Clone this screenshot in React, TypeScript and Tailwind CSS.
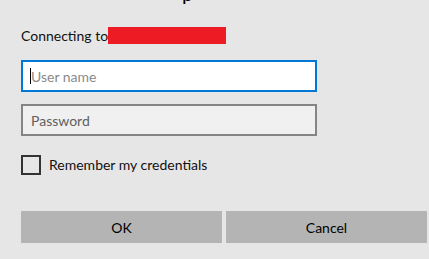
import React from 'react';

const font = { fontFamily: 'Lato, "Noto Sans", sans-serif' };

export default function App() {
  return (
    <div className="w-[429px] h-[259px] overflow-hidden bg-[#e6e6e6] text-[#000]" style={font}>
      {/* clipped dialog title: only the tail of a letter shows */}
      <div className="h-[4px] overflow-hidden">
        <div className="ml-[182px] -mt-[19px] text-[20px] leading-[24px] text-[#000]">p</div>
      </div>

      <div className="pl-[21px] pr-[112px]">
        <div className="flex items-center mt-[23px] h-[17px]">
          <span className="text-[14px] leading-[17px] text-[#111]">Connecting to</span>
          <span className="w-[118px] h-[17px] bg-[#ed1c24]" />
        </div>

        <div className="mt-[16px] h-[32px] w-[296px] border-2 border-[#0078d7] bg-white flex items-center pl-[7px]">
          <span className="w-[1px] h-[16px] bg-black" />
          <span className="text-[14px] text-[#8a8a8a]">User name</span>
        </div>

        <div className="mt-[12px] h-[32px] w-[296px] border-2 border-[#858585] bg-[#f0f0f0] flex items-center pl-[8px]">
          <span className="text-[14px] text-[#5f5f5f]">Password</span>
        </div>

        <label className="mt-[18px] flex items-center gap-[8px]">
          <span className="w-[20px] h-[20px] border-2 border-[#333333] bg-transparent" />
          <span className="text-[14px] text-[#111]">Remember my credentials</span>
        </label>
      </div>

      <div className="mt-[36px] pl-[21px] flex gap-[4px]">
        <button className="w-[201px] h-[32px] shrink-0 bg-[#b4b4b4] text-[14px] text-[#000]">OK</button>
        <button className="w-[201px] h-[32px] shrink-0 bg-[#b4b4b4] text-[14px] text-[#000]">Cancel</button>
      </div>
    </div>
  );
}
